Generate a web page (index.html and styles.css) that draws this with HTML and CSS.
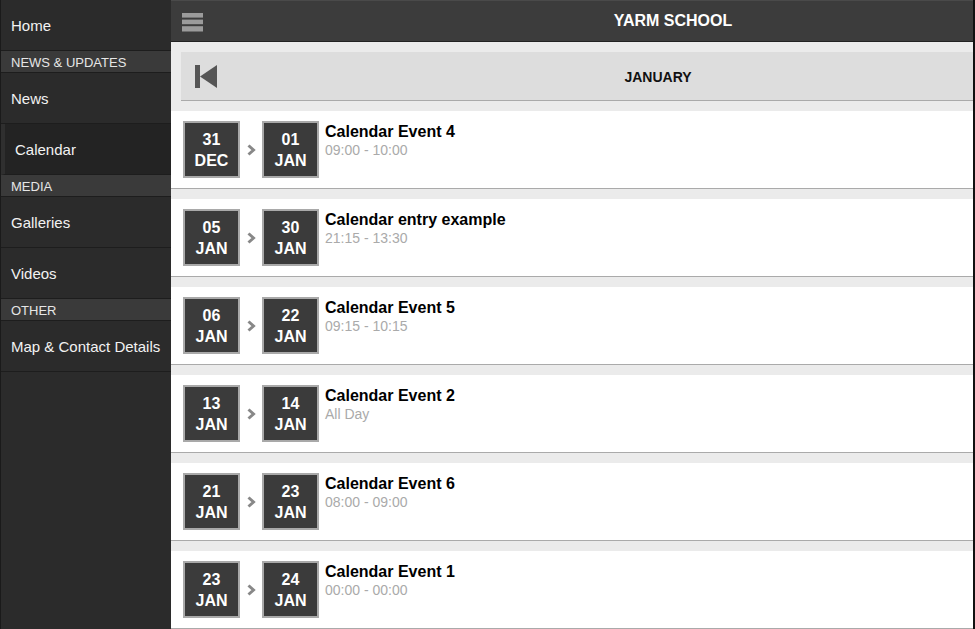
FILE: index.html
```html
<!DOCTYPE html>
<html lang="en">
<head>
<meta charset="utf-8">
<title>Yarm School - Calendar</title>
<link rel="stylesheet" href="styles.css">
</head>
<body>
<div class="app">
  <nav class="sidebar">
    <a class="nav-item" href="#">Home</a>
    <div class="nav-divider">NEWS &amp; UPDATES</div>
    <a class="nav-item" href="#">News</a>
    <a class="nav-item active" href="#">Calendar</a>
    <div class="nav-divider">MEDIA</div>
    <a class="nav-item" href="#">Galleries</a>
    <a class="nav-item" href="#">Videos</a>
    <div class="nav-divider">OTHER</div>
    <a class="nav-item" href="#">Map &amp; Contact Details</a>
  </nav>
  <main class="main">
    <header class="topbar">
      <button class="menu-btn" aria-label="Menu">
        <svg width="21" height="19" viewBox="0 0 21 19"><rect x="0" y="0" width="21" height="4.6" fill="#9b9b9b"/><rect x="0" y="6.6" width="21" height="4.6" fill="#9b9b9b"/><rect x="0" y="13.2" width="21" height="5.3" fill="#9b9b9b"/></svg>
      </button>
      <h1 class="title">YARM SCHOOL</h1>
    </header>
    <div class="content">
      <div class="month-bar">
        <button class="prev-btn" aria-label="Previous">
          <svg width="22" height="23" viewBox="0 0 22 23"><rect x="0" y="0" width="5" height="23" fill="#555"/><polygon points="22,0 22,23 5,11.5" fill="#555"/></svg>
        </button>
        <h2 class="month">JANUARY</h2>
      </div>
      <ul class="events">
        <li class="event">
          <div class="date"><span>31</span><span>DEC</span></div>
          <span class="chev"><svg width="9" height="12" viewBox="0 0 9 12"><polyline points="1.5,1.5 6.5,6 1.5,10.5" fill="none" stroke="#888" stroke-width="3"/></svg></span>
          <div class="date"><span>01</span><span>JAN</span></div>
          <div class="info"><div class="ev-title">Calendar Event 4</div><div class="ev-time">09:00 - 10:00</div></div>
        </li>
        <li class="event">
          <div class="date"><span>05</span><span>JAN</span></div>
          <span class="chev"><svg width="9" height="12" viewBox="0 0 9 12"><polyline points="1.5,1.5 6.5,6 1.5,10.5" fill="none" stroke="#888" stroke-width="3"/></svg></span>
          <div class="date"><span>30</span><span>JAN</span></div>
          <div class="info"><div class="ev-title">Calendar entry example</div><div class="ev-time">21:15 - 13:30</div></div>
        </li>
        <li class="event">
          <div class="date"><span>06</span><span>JAN</span></div>
          <span class="chev"><svg width="9" height="12" viewBox="0 0 9 12"><polyline points="1.5,1.5 6.5,6 1.5,10.5" fill="none" stroke="#888" stroke-width="3"/></svg></span>
          <div class="date"><span>22</span><span>JAN</span></div>
          <div class="info"><div class="ev-title">Calendar Event 5</div><div class="ev-time">09:15 - 10:15</div></div>
        </li>
        <li class="event">
          <div class="date"><span>13</span><span>JAN</span></div>
          <span class="chev"><svg width="9" height="12" viewBox="0 0 9 12"><polyline points="1.5,1.5 6.5,6 1.5,10.5" fill="none" stroke="#888" stroke-width="3"/></svg></span>
          <div class="date"><span>14</span><span>JAN</span></div>
          <div class="info"><div class="ev-title">Calendar Event 2</div><div class="ev-time">All Day</div></div>
        </li>
        <li class="event">
          <div class="date"><span>21</span><span>JAN</span></div>
          <span class="chev"><svg width="9" height="12" viewBox="0 0 9 12"><polyline points="1.5,1.5 6.5,6 1.5,10.5" fill="none" stroke="#888" stroke-width="3"/></svg></span>
          <div class="date"><span>23</span><span>JAN</span></div>
          <div class="info"><div class="ev-title">Calendar Event 6</div><div class="ev-time">08:00 - 09:00</div></div>
        </li>
        <li class="event">
          <div class="date"><span>23</span><span>JAN</span></div>
          <span class="chev"><svg width="9" height="12" viewBox="0 0 9 12"><polyline points="1.5,1.5 6.5,6 1.5,10.5" fill="none" stroke="#888" stroke-width="3"/></svg></span>
          <div class="date"><span>24</span><span>JAN</span></div>
          <div class="info"><div class="ev-title">Calendar Event 1</div><div class="ev-time">00:00 - 00:00</div></div>
        </li>
      </ul>
    </div>
  </main>
</div>
</body>
</html>
```
FILE: styles.css
```css
* { box-sizing: border-box; }
html, body { margin: 0; padding: 0; height: 100%; }
body {
  background: #1c1c1c;
  font-family: "Liberation Sans", Arial, sans-serif;
  overflow: hidden;
}
.app {
  display: flex;
  height: 629px;
}
.sidebar {
  width: 171px;
  flex: none;
  background: #2b2b2b;
  border-left: 1px solid #1a1a1a;
  display: flex;
  flex-direction: column;
}
.nav-item {
  display: flex;
  align-items: center;
  height: 51px;
  padding-left: 10px;
  color: #f2f2f2;
  font-size: 15px;
  text-decoration: none;
  border-bottom: 1px solid #1d1d1d;
}
.nav-item.active {
  background: #232323;
  border-left: 4px solid #2f2f2f;
  padding-left: 10px;
}
.nav-divider {
  height: 22px;
  padding-left: 10px;
  padding-top: 1px;
  display: flex;
  align-items: center;
  background: #3a3a3a;
  color: #e6e6e6;
  font-size: 13px;
  border-bottom: 1px solid #1d1d1d;
}
.main {
  flex: 1;
  display: flex;
  flex-direction: column;
  background: #ebebeb;
  border-right: 2px solid #111;
  min-width: 0;
}
.topbar {
  height: 42px;
  flex: none;
  display: flex;
  align-items: center;
  background: #3c3c3c;
  border-top: 1px solid #4a4a4a;
  border-bottom: 1px solid #222;
  padding-left: 11px;
}
.menu-btn, .prev-btn {
  border: 0;
  background: none;
  padding: 0;
  display: flex;
  cursor: pointer;
}
.menu-btn { margin-top: 2px; }
.title {
  flex: 1;
  margin: 0;
  text-align: center;
  padding-left: 170px;
  color: #fff;
  font-size: 16px;
  font-weight: bold;
}
.content {
  flex: 1;
  padding-top: 10px;
  overflow: hidden;
}
.month-bar {
  margin-left: 10px;
  height: 49px;
  display: flex;
  align-items: center;
  background: #dddddd;
  border-bottom: 1px solid #aaa;
  padding-left: 14px;
  padding-top: 1px;
}
.month {
  flex: 1;
  margin: 0;
  text-align: center;
  padding-left: 126px;
  padding-top: 1px;
  font-size: 14px;
  font-weight: bold;
  color: #111;
}
.events {
  list-style: none;
  margin: 10px 0 0;
  padding: 0;
}
.event {
  display: flex;
  align-items: flex-start;
  background: #fff;
  padding: 10px 12px;
  border-bottom: 1px solid #aaa;
  margin-bottom: 10px;
}
.date {
  width: 57px;
  height: 57px;
  flex: none;
  border: 2px solid #a9a9a9;
  background: #3b3b3b;
  color: #fff;
  font-weight: bold;
  font-size: 16px;
  line-height: 21px;
  padding-top: 1px;
  display: flex;
  flex-direction: column;
  align-items: center;
  justify-content: center;
}
.chev {
  width: 22px;
  height: 57px;
  flex: none;
  display: flex;
  align-items: center;
  padding-left: 7px;
  padding-top: 1px;
}
.info {
  margin-left: 6px;
  margin-top: 2px;
}
.ev-title {
  font-size: 16px;
  line-height: 18px;
  font-weight: bold;
  color: #000;
}
.ev-time {
  font-size: 14px;
  line-height: 19px;
  color: #aaa;
}
```
